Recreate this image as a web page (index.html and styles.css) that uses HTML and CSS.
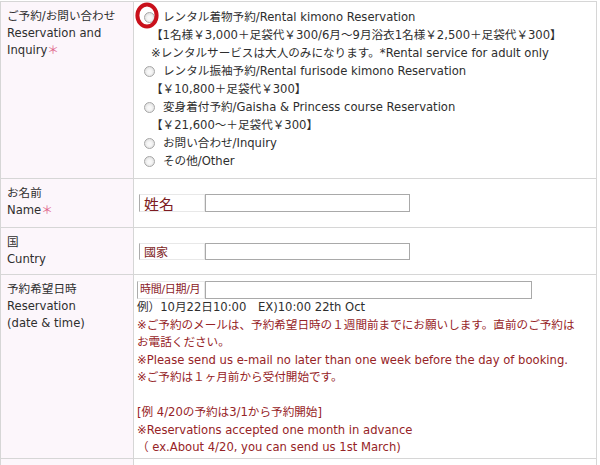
FILE: index.html
```html
<!DOCTYPE html>
<html lang="ja">
<head>
<meta charset="utf-8">
<title>Reservation form</title>
<link rel="stylesheet" href="styles.css">
</head>
<body>
<div class="wrap">
<table class="form">
<colgroup><col class="c1"><col class="c2"></colgroup>
<tr>
<th>ご予約/お問い合わせ<br>Reservation and<br>Inquiry<span class="req">＊</span></th>
<td class="opts">
<div class="opt"><span class="radio"></span>レンタル着物予約/Rental kimono Reservation</div>
<div class="sub">【1名様￥3,000＋足袋代￥300/6月～9月浴衣1名様￥2,500＋足袋代￥300】</div>
<div class="sub sub-note">※レンタルサービスは大人のみになります。*Rental service for adult only</div>
<div class="opt"><span class="radio"></span>レンタル振袖予約/Rental furisode kimono Reservation</div>
<div class="sub">【￥10,800＋足袋代￥300】</div>
<div class="opt"><span class="radio"></span>変身着付予約/Gaisha &amp; Princess course Reservation</div>
<div class="sub">【￥21,600～＋足袋代￥300】</div>
<div class="opt"><span class="radio"></span>お問い合わせ/Inquiry</div>
<div class="opt"><span class="radio"></span>その他/Other</div>
</td>
</tr>
<tr>
<th class="name">お名前<br>Name<span class="req">＊</span></th>
<td class="mid">
<label class="field"><span class="tag tag-lg">姓名</span><input class="text" type="text"></label>
</td>
</tr>
<tr>
<th class="short">国<br>Cuntry</th>
<td class="mid">
<label class="field field-sm"><span class="tag tag-sm">國家</span><input class="text" type="text"></label>
</td>
</tr>
<tr>
<th>予約希望日時<br>Reservation<br>(date &amp; time)</th>
<td class="date">
<label class="field field-wide"><span class="tag tag-date">時間/日期/月</span><input class="text" type="text"></label>
<div class="eg">例）10月22日10:00　EX)10:00 22th Oct</div>
<div class="note">※ご予約のメールは、予約希望日時の１週間前までにお願いします。直前のご予約は</div>
<div class="note">お電話ください。</div>
<div class="note">※Please send us e-mail no later than one week before the day of booking.</div>
<div class="note">※ご予約は１ヶ月前から受付開始です。</div>
<div class="note">&nbsp;</div>
<div class="note">[例 4/20の予約は3/1から予約開始]</div>
<div class="note">※Reservations accepted one month in advance</div>
<div class="note">（ ex.About 4/20, you can send us 1st March)</div>
</td>
</tr>
<tr class="next">
<th></th>
<td></td>
</tr>
</table>
<svg class="ring" width="26" height="28" viewBox="0 0 26 28"><ellipse cx="13" cy="13.5" rx="9.6" ry="11" fill="none" stroke="#c9101b" stroke-width="4"/></svg>
</div>
</body>
</html>
```
FILE: styles.css
```css
* { box-sizing: border-box; }
html, body { margin: 0; background: #fff; }
body {
  font-family: "DejaVu Sans", "Noto Sans CJK JP", sans-serif;
  font-size: 11.6px;
  color: #2e2e2e;
}
.wrap { position: relative; padding-top: 1px; width: 600px; height: 465px; overflow: hidden; }
.form {
  border-collapse: separate;
  border-spacing: 0;
  table-layout: fixed;
  width: 596px;
  border-top: 1px solid #d6d6d6;
  border-left: 1px solid #d6d6d6;
}
col.c1 { width: 133px; }
col.c2 { width: 463px; }
.form th, .form td {
  border-right: 1px solid #d6d6d6;
  border-bottom: 1px solid #d6d6d6;
  vertical-align: top;
  text-align: left;
  font-weight: normal;
}
.form th {
  background: #fcf6fb;
  padding: 6px 4px 7px 6px;
  line-height: 17px;
}
.form th.name { padding-bottom: 8px; }
.form th.short { padding-bottom: 6px; }
.form td { padding: 0 3px; background: #fff; }
.req { color: #e0678c; }

.opts { padding-top: 6px !important; padding-bottom: 8px !important; line-height: 18px; }
.opt { display: flex; align-items: center; height: 18px; }
.radio {
  width: 11px; height: 11px;
  border-radius: 50%;
  border: 1px solid #a6a6a6;
  background: radial-gradient(circle at 50% 55%, #f8f8f8 25%, #d6d6d6 100%);
  margin-left: 7px; margin-right: 8px;
  flex: none;
}
.sub { padding-left: 14px; white-space: nowrap; }

.mid { vertical-align: middle !important; }
.field { display: flex; margin-left: 2px; width: 271px; }
.tag {
  width: 66px; height: 18px;
  display: flex; align-items: center;
  background: #fff;
  border: 1px solid #e8e8e8;
  border-left: 1px solid #acacac;
  color: #7d1c22;
  padding-left: 4px;
  flex: none;
  white-space: nowrap;
  overflow: hidden;
}
.tag-lg { font-size: 15px; }
.tag-sm { font-size: 12px; }
.field-sm .tag, .field-sm .text { height: 17px; }
.text {
  flex: 1;
  min-width: 0;
  height: 18px;
  margin: 0; padding: 0;
  border: 1px solid #a9a9a9;
  background: #fff;
  font: inherit;
}
.date { padding-top: 6px !important; padding-bottom: 1px !important; line-height: 17.5px; }
.field-wide { margin-left: 0; width: 395px; }
.tag-date { width: 68px; padding-left: 2px; color: #8a1a1f; font-size: 11px; letter-spacing: -0.3px; }
.eg { color: #2e2e2e; white-space: nowrap; }
.note { color: #962326; white-space: nowrap; }
.next th, .next td { height: 14px; }

.ring { position: absolute; left: 134px; top: 2px; }
```
